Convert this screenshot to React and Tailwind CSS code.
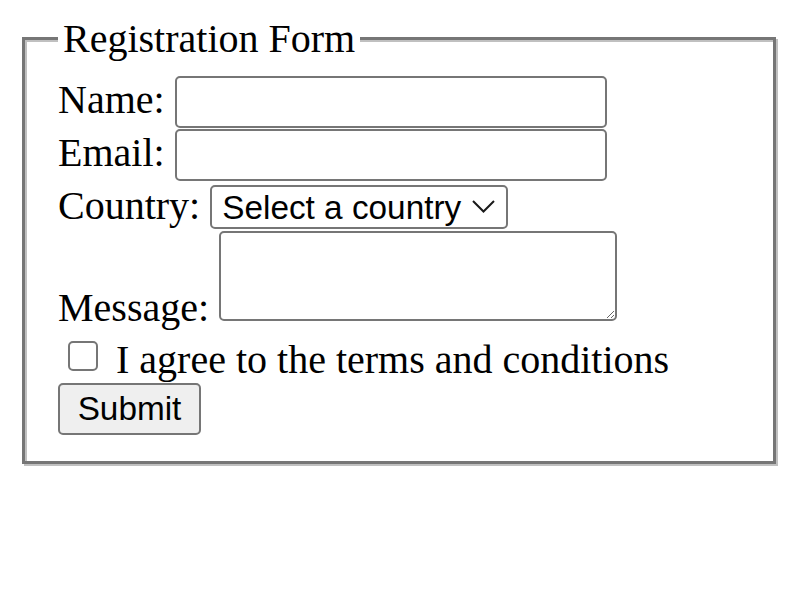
import React, { useState } from "react";

const inputFont = "font-['Liberation_Sans',Arial,sans-serif] text-[33.33px] leading-[normal] text-black";

const App = () => {
  const [name, setName] = useState("");
  const [email, setEmail] = useState("");
  const [country, setCountry] = useState("");
  const [message, setMessage] = useState("");
  const [agree, setAgree] = useState(false);

  const handleSubmit = (e) => {
    e.preventDefault();
  };

  return (
    <div className="w-[800px] h-[600px] bg-white pt-[15px] font-['Liberation_Serif','Times_New_Roman',serif] text-[40px] leading-[normal] text-black">
      <form onSubmit={handleSubmit}>
        {/* groove look: dark 3px border + light 2px lines (outer bottom/right, inner top/left) */}
        <fieldset className="ml-[22px] mr-[24px] border-[3px] border-solid border-[#767676] shadow-[2px_2px_0_#c0c0c0,inset_2px_2px_0_#c0c0c0] pl-[33px] pr-[30px] pt-[14px] pb-[26px]">
          <legend className="px-[5px] bg-white">Registration Form</legend>
          Name:{" "}
          <input
            type="text"
            value={name}
            onChange={(e) => setName(e.target.value)}
            className={`w-[432px] h-[52px] border-2 border-[#767676] rounded-[5px] px-[5px] bg-white ${inputFont}`}
          />
          <br />
          Email:{" "}
          <input
            type="email"
            value={email}
            onChange={(e) => setEmail(e.target.value)}
            className={`w-[432px] h-[52px] mt-[1px] border-2 border-[#767676] rounded-[5px] px-[5px] bg-white ${inputFont}`}
          />
          <br />
          Country:{" "}
          {/* font-size 0 so the wrapper adds no strut of its own */}
          <span className="relative inline-block mt-[4px] mb-[2px] text-[0px] leading-none">
            <select
              value={country}
              onChange={(e) => setCountry(e.target.value)}
              className={`appearance-none w-[298px] h-[44px] border-2 border-[#767676] rounded-[5px] pl-[10px] pr-[40px] bg-white ${inputFont}`}
            >
              <option value="">Select a country</option>
              <option value="us">United States</option>
              <option value="uk">United Kingdom</option>
              <option value="ca">Canada</option>
            </select>
            <svg
              className="absolute right-[13px] top-[15px] pointer-events-none"
              width="23"
              height="13"
              viewBox="0 0 23 13"
              fill="none"
            >
              <polyline points="1,1 11.5,11.5 22,1" stroke="#1a1a1a" strokeWidth="2" />
            </svg>
          </span>
          <br />
          Message:{" "}
          <textarea
            value={message}
            onChange={(e) => setMessage(e.target.value)}
            className={`w-[398px] h-[90px] border-2 border-[#767676] rounded-[5px] p-[5px] bg-white ${inputFont}`}
          />
          <br />
          <input
            type="checkbox"
            checked={agree}
            onChange={(e) => setAgree(e.target.checked)}
            className="appearance-none w-[30px] h-[30px] ml-[10px] mr-[8px] mt-[9.5px] align-[2px] border-2 border-[#767676] rounded-[5px] bg-white"
          />{" "}
          I agree to the terms and conditions
          <br />
          <button
            type="submit"
            className={`w-[143px] h-[52px] border-2 border-[#767676] rounded-[5px] bg-[#efefef] ${inputFont}`}
          >
            Submit
          </button>
        </fieldset>
      </form>
    </div>
  );
};

export default App;
